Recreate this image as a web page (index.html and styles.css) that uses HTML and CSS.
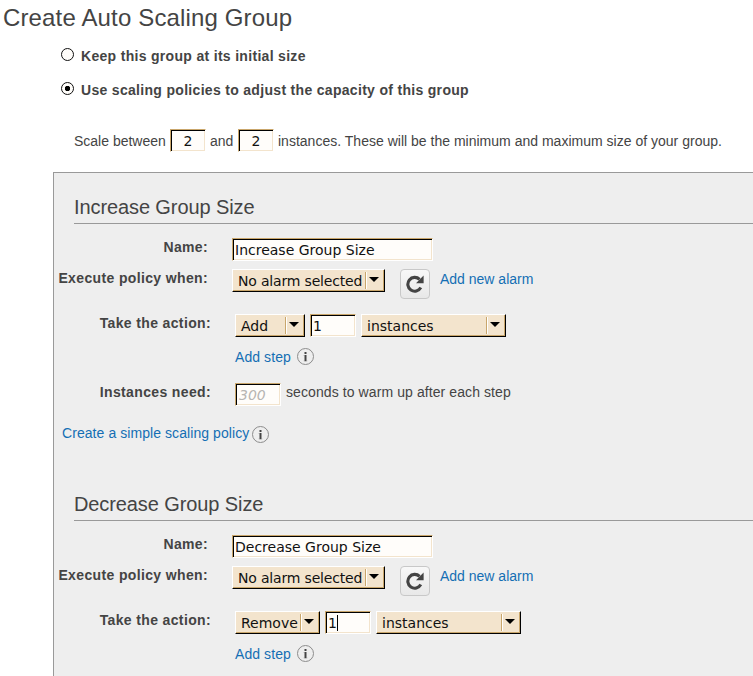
FILE: index.html
```html
<!DOCTYPE html>
<html lang="en">
<head>
<meta charset="utf-8">
<title>Create Auto Scaling Group</title>
<link rel="stylesheet" href="styles.css">
</head>
<body>
<svg width="0" height="0" class="defs" aria-hidden="true">
  <symbol id="info" viewBox="0 0 17 17"><circle cx="8.5" cy="8.5" r="8" fill="#eee" stroke="#8c8c8c"/><path d="M7.5 4h2v2h-2zM7.5 7h2v6.2h-2z" fill="#444"/><path d="M6.8 7h.7v1h-.7zM6.8 12.4h.7v.8h-.7zM9.5 12.4h.7v.8h-.7z" fill="#888"/></symbol>
  <symbol id="reload" viewBox="0 0 18 18"><path d="M13.6 4.4A6.9 6.9 0 1 0 14.8 12.6" fill="none" stroke="#444" stroke-width="3.1"/><path d="M17.6 .6v7.6H10z" fill="#444"/></symbol>
</svg>
<h1><span class="t-title">Create Auto Scaling Group</span></h1>
<div class="choices">
  <div class="choice"><i class="radio"></i><b>Keep this group at its initial size</b></div>
  <div class="choice"><i class="radio on"></i><b>Use scaling policies to adjust the capacity of this group</b></div>
</div>
<div class="range">
  <span class="t-between">Scale between</span><span class="field tiny">2</span><span class="t-and">and</span><span class="field tiny">2</span><span class="t-range">instances. These will be the minimum and maximum size of your group.</span>
</div>
<main class="panel">
  <section class="group">
    <h2>Increase Group Size</h2>
    <div class="row name"><b class="label">Name:</b><span class="field wide">Increase Group Size</span></div>
    <div class="row alarm"><b class="label">Execute policy when:</b><span class="select alarm-select"><span>No alarm selected</span><i></i></span><span class="refresh"><svg width="18" height="18"><use href="#reload"/></svg></span><a class="t-new">Add new alarm</a></div>
    <div class="row action"><b class="label">Take the action:</b><span class="select add"><span>Add</span><i></i></span><span class="field amount">1</span><span class="select unit"><span>instances</span><i></i></span></div>
    <div class="row step"><a class="t-step">Add step</a><svg width="17" height="17"><use href="#info"/></svg></div>
    <div class="row warm"><b class="label">Instances need:</b><span class="field amount muted">300</span><span class="t-warm">seconds to warm up after each step</span></div>
    <div class="row simple"><a class="t-simple">Create a simple scaling policy</a><svg width="17" height="17"><use href="#info"/></svg></div>
  </section>
  <section class="group">
    <h2>Decrease Group Size</h2>
    <div class="row name"><b class="label">Name:</b><span class="field wide">Decrease Group Size</span></div>
    <div class="row alarm"><b class="label">Execute policy when:</b><span class="select alarm-select"><span>No alarm selected</span><i></i></span><span class="refresh"><svg width="18" height="18"><use href="#reload"/></svg></span><a class="t-new">Add new alarm</a></div>
    <div class="row action"><b class="label">Take the action:</b><span class="select remove"><span>Remove</span><i></i></span><span class="field amount caret">1</span><span class="select unit"><span>instances</span><i></i></span></div>
    <div class="row step"><a class="t-step">Add step</a><svg width="17" height="17"><use href="#info"/></svg></div>
  </section>
</main>
</body>
</html>
```
FILE: styles.css
```css
*, *::before, *::after { box-sizing: border-box; }
html, body { height: 676px; overflow: hidden; }
body { margin: 0; background: #fff; color: #444; font: 14px/17px "Liberation Sans", Arial, sans-serif; white-space: nowrap; display: flex; flex-direction: column; }
.defs { position: absolute; }
h1, h2 { margin: 0; font-weight: normal; }
h1 { height: 47px; padding: 4px 0 0 3px; font-size: 24px; line-height: 28px; letter-spacing: .15px; }
b { letter-spacing: .31px; }
.choices { height: 82px; padding-left: 61px; }
.choice { display: flex; height: 34px; }
.choice b { margin-top: 1px; }
.radio { width: 13px; height: 13px; margin: 1px 7px 0 0; border: 1px solid #111; border-radius: 50%; background: #fffdfa; }
.radio.on { background: radial-gradient(circle, #000 0 2.4px, #fffdfa 3px); }
.range { display: flex; height: 43px; padding-left: 74px; }
.range > span:not(.field) { margin-top: 4px; }
.t-between { width: 96px; }
.t-and { width: 28px; }
.t-range { letter-spacing: .01px; }
.field { display: block; height: 23px; flex: none; padding: 1px 2px 0; border: 1px solid #fff; border-top-color: #c9a66b; border-left-color: #c9a66b; box-shadow: inset 1px 1px #000, inset -1px -1px #f3e4cd; background: #fffdfa; color: #111; font: 14px/20px "DejaVu Sans", sans-serif; }
.tiny { width: 36px; text-align: center; margin-right: 4px; }
.wide { width: 201px; }
.amount { width: 46px; margin: 0 5px; padding-left: 2px; }
.muted { color: #b7b5b2; font-style: italic; margin-left: 0; padding-left: 3px; }
.caret::after { content: ""; display: inline-block; width: 1px; height: 16px; background: #000; vertical-align: -3px; }
.panel { flex: 1; min-height: 0; margin-left: 53px; border: 1px solid #999; border-width: 1px 0 0 1px; background: #eee; overflow: hidden; }
.group { height: 297px; }
h2 { height: 51px; margin: 0 0 14px 20px; padding-top: 22px; border-bottom: 1px solid #999; font-size: 20px; line-height: 24px; letter-spacing: -.1px; }
.row { display: flex; align-items: flex-start; }
.label { width: 154px; margin: 1px 24px 0 0; text-align: right; flex: none; letter-spacing: .36px; }
.name { height: 31px; }
.alarm { height: 45px; }
.action { height: 34px; }
.action .label, .warm .label { width: 157px; }
.step { height: 35px; padding-left: 181px; }
.warm { height: 42px; }
.simple { padding-left: 8px; }
.simple svg { margin-top: 1px; }
a { color: #146eb4; }
.select { display: flex; height: 23px; flex: none; padding: 1px 0 0 5px; border: 1px solid #000; border-top-color: #fff; border-left-color: #fff; box-shadow: inset -1px -1px #c9a66b; background: #f3e4cd; color: #111; font: 14px/20px "DejaVu Sans", sans-serif; }
.select > span { flex: 1; min-width: 0; }
.select i { width: 19px; height: 17px; flex: none; margin-top: 1px; border-left: 1px solid #c9a66b; box-shadow: inset 1px 0 #fff; }
.select i::before { content: ""; display: block; width: 0; margin: 5px 0 0 3px; border: 5px solid transparent; border-top-color: #000; border-bottom: 0; }
.alarm-select { width: 153px; letter-spacing: -.18px; }
.add { width: 70px; }
.remove { width: 85px; }
.unit { width: 145px; }
.refresh { display: flex; width: 30px; height: 30px; margin: 0 10px 0 15px; border: 1px solid #c8c8c8; border-radius: 4px; background: linear-gradient(#f8f8f8, #e8e8e8); align-items: center; justify-content: center; }
.t-new { margin-top: 2px; }
.t-step { width: 62px; margin-top: 1px; letter-spacing: .08px; }
.t-warm { margin-top: 1px; letter-spacing: .09px; }
.t-simple { width: 190px; letter-spacing: .07px; }
```
